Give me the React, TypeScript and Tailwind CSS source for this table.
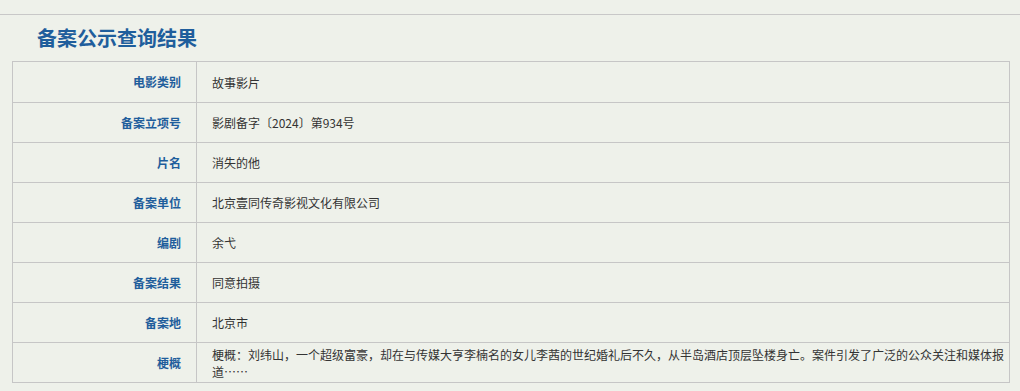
const rows: { label: string; value: string }[] = [
  { label: "电影类别", value: "故事影片" },
  { label: "备案立项号", value: "影剧备字〔2024〕第934号" },
  { label: "片名", value: "消失的他" },
  { label: "备案单位", value: "北京壹同传奇影视文化有限公司" },
  { label: "编剧", value: "余弋" },
  { label: "备案结果", value: "同意拍摄" },
  { label: "备案地", value: "北京市" },
  {
    label: "梗概",
    value:
      "梗概：刘纬山，一个超级富豪，却在与传媒大亨李楠名的女儿李茜的世纪婚礼后不久，从半岛酒店顶层坠楼身亡。案件引发了广泛的公众关注和媒体报道……",
  },
]

export default function App() {
  return (
    <div
      className="h-[391px] w-[1020px] overflow-hidden bg-[#eef1ea] pt-[14px]"
      style={{ fontFamily: '"Noto Sans CJK SC", "Noto Sans", sans-serif' }}
    >
      <div className="border-t border-[#c8c8c8]">
        <h1 className="flex h-[46px] items-center pl-[37px] text-[20px] font-bold leading-none text-[#1f5e9c]">
          备案公示查询结果
        </h1>
      </div>

      <div className="ml-[12px] w-[998px] border border-[#c6c6c6]">
        {rows.map((r, i) => (
          <div
            key={r.label}
            className={`flex h-[40px] ${i > 0 ? "border-t border-[#c6c6c6]" : ""}`}
          >
            <div className="flex w-[184px] shrink-0 items-center justify-end border-r border-[#c6c6c6] pr-[15px] text-[12px] font-bold text-[#1f5e9c]">
              {r.label}
            </div>
            <div className="flex min-w-0 flex-1 items-center pl-[15px] pr-0 text-[12px] leading-[17px] text-[#333333]">
              {r.value}
            </div>
          </div>
        ))}
      </div>
    </div>
  )
}
